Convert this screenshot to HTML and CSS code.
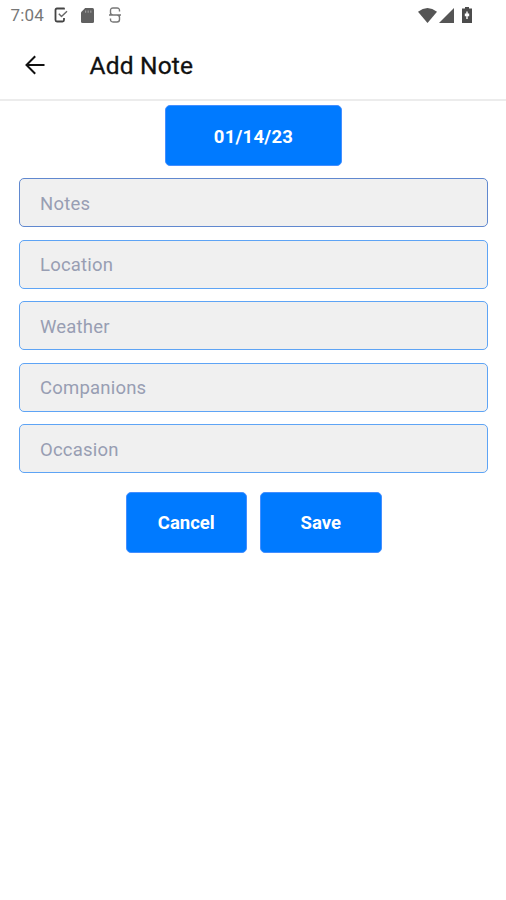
FILE: index.html
```html
<!DOCTYPE html>
<html lang="en">
<head>
<meta charset="utf-8">
<title>Add Note</title>
<link rel="stylesheet" href="styles.css">
</head>
<body>
<div class="status">
  <span class="time">7:04</span>
  <svg class="clip" width="14" height="16" viewBox="0 0 14 16" fill="none" stroke-linejoin="round"><path stroke="#444" stroke-width="1.8" d="M10 2.5V1.5H3Q1.5 1.5 1.5 3v10q0 1.5 1.5 1.5h5.5q1.5 0 1.5-1.5v-2"/><path stroke="#666" stroke-width="1.4" d="M4.8 6.8l2.7 2.7L13 4.2"/></svg>
  <svg class="sd" width="13" height="15" viewBox="0 0 13 15"><path fill="#606060" d="M4.2 0H11.5A1.5 1.5 0 0 1 13 1.5v12a1.5 1.5 0 0 1-1.5 1.5h-10A1.5 1.5 0 0 1 0 13.5V4.2z"/><path stroke="#999" stroke-width="1.2" d="M4.6 2.4v2.4M7.2 2.4v2.4M9.8 2.4v2.4"/></svg>
  <svg class="sync" width="12" height="16" viewBox="0 0 12 16" fill="none" stroke="#777" stroke-width="1.4"><path d="M10.5 4.500V3.500Q10.500 1 8 1H4Q1.500 1 1.500 3.500V5.500Q1.500 8 4 8H8Q10.500 8 10.500 10.500V12.500Q10.500 15 8 15H4Q1.500 15 1.500 12.500V11.500M0 8h12"/></svg>
  <span class="spacer"></span>
  <svg class="wifi" width="19" height="15" viewBox="0 0 19 15"><path fill="#555" d="M0 3.8Q9.5-3.6 19 3.8L9.5 15z"/></svg>
  <svg class="signal" width="15" height="15" viewBox="0 0 15 15"><path fill="#555" d="M15 0v15H0z"/></svg>
  <svg class="battery" width="10" height="16" viewBox="0 0 10 16"><path fill="#4c4c4c" d="M3 0h4v1.500h3V16H0V1.500h3z"/><path fill="#fff" d="M4.300 4.500h1.400v2h1.500v2.700H5.700V12H4.300V9.200H2.800V6.500h1.500z"/></svg>
</div>
<header class="header">
  <svg class="back" width="20" height="20" viewBox="0 0 20 20" fill="none" stroke="#111" stroke-width="2"><path d="M19.5 10H1.800M10.200 1.300L1.500 10l8.700 8.700"/></svg>
  <h1 class="title">Add Note</h1>
</header>
<main class="form">
  <button class="button date">01/14/23</button>
  <div class="fields">
    <input class="field active" placeholder="Notes">
    <input class="field" placeholder="Location">
    <input class="field" placeholder="Weather">
    <input class="field" placeholder="Companions">
    <input class="field" placeholder="Occasion">
  </div>
  <div class="actions">
    <button class="button">Cancel</button>
    <button class="button">Save</button>
  </div>
</main>
</body>
</html>
```
FILE: styles.css
```css
* { box-sizing: border-box; }
body {
  margin: 0;
  height: 900px;
  background: #fff;
  font-family: Roboto, sans-serif;
}
svg { display: block; flex: none; }
.status {
  display: flex;
  align-items: center;
  height: 30px;
  padding: 0 34px 0 10.5px;
}
.time { width: 43.5px; font-size: 17px; letter-spacing: 0.2px; color: #777; }
.sd { margin-left: 13px; }
.sync { margin-left: 15px; }
.spacer { flex: 1; }
.signal { margin-left: 2px; }
.battery { margin-left: 8px; }
.header {
  display: flex;
  align-items: center;
  height: 71px;
  padding: 0 25px;
  border-bottom: 2px solid #ececec;
}
.title {
  margin: 2px 0 0 44.5px;
  font-size: 24.5px;
  font-weight: 400;
  letter-spacing: 0.2px;
  color: #111;
  -webkit-text-stroke: 0.3px #111;
}
.form {
  display: flex;
  flex-direction: column;
  align-items: center;
  padding: 4px 18px 0 19px;
}
.button {
  width: 121.5px;
  height: 61px;
  padding: 2px 0 0;
  border: 1px solid #448fff;
  border-radius: 5px;
  background: #007aff;
  color: #fff;
  font: 700 18.5px Roboto, sans-serif;
}
.date { width: 177px; letter-spacing: 0.25px; }
.fields {
  display: grid;
  gap: 12.5px;
  width: 100%;
  margin-top: 12px;
}
.field {
  width: 100%;
  height: 49px;
  padding: 2px 20px 0;
  border: 1px solid #5ea4f5;
  border-radius: 5px;
  background: #f0f0f0;
  font: 400 18.5px Roboto, sans-serif;
  letter-spacing: 0.2px;
}
.field.active { border-color: #6088cf; }
.field::placeholder { color: #989eb3; opacity: 1; }
.actions { display: flex; gap: 13px; margin-top: 18.5px; }
```
